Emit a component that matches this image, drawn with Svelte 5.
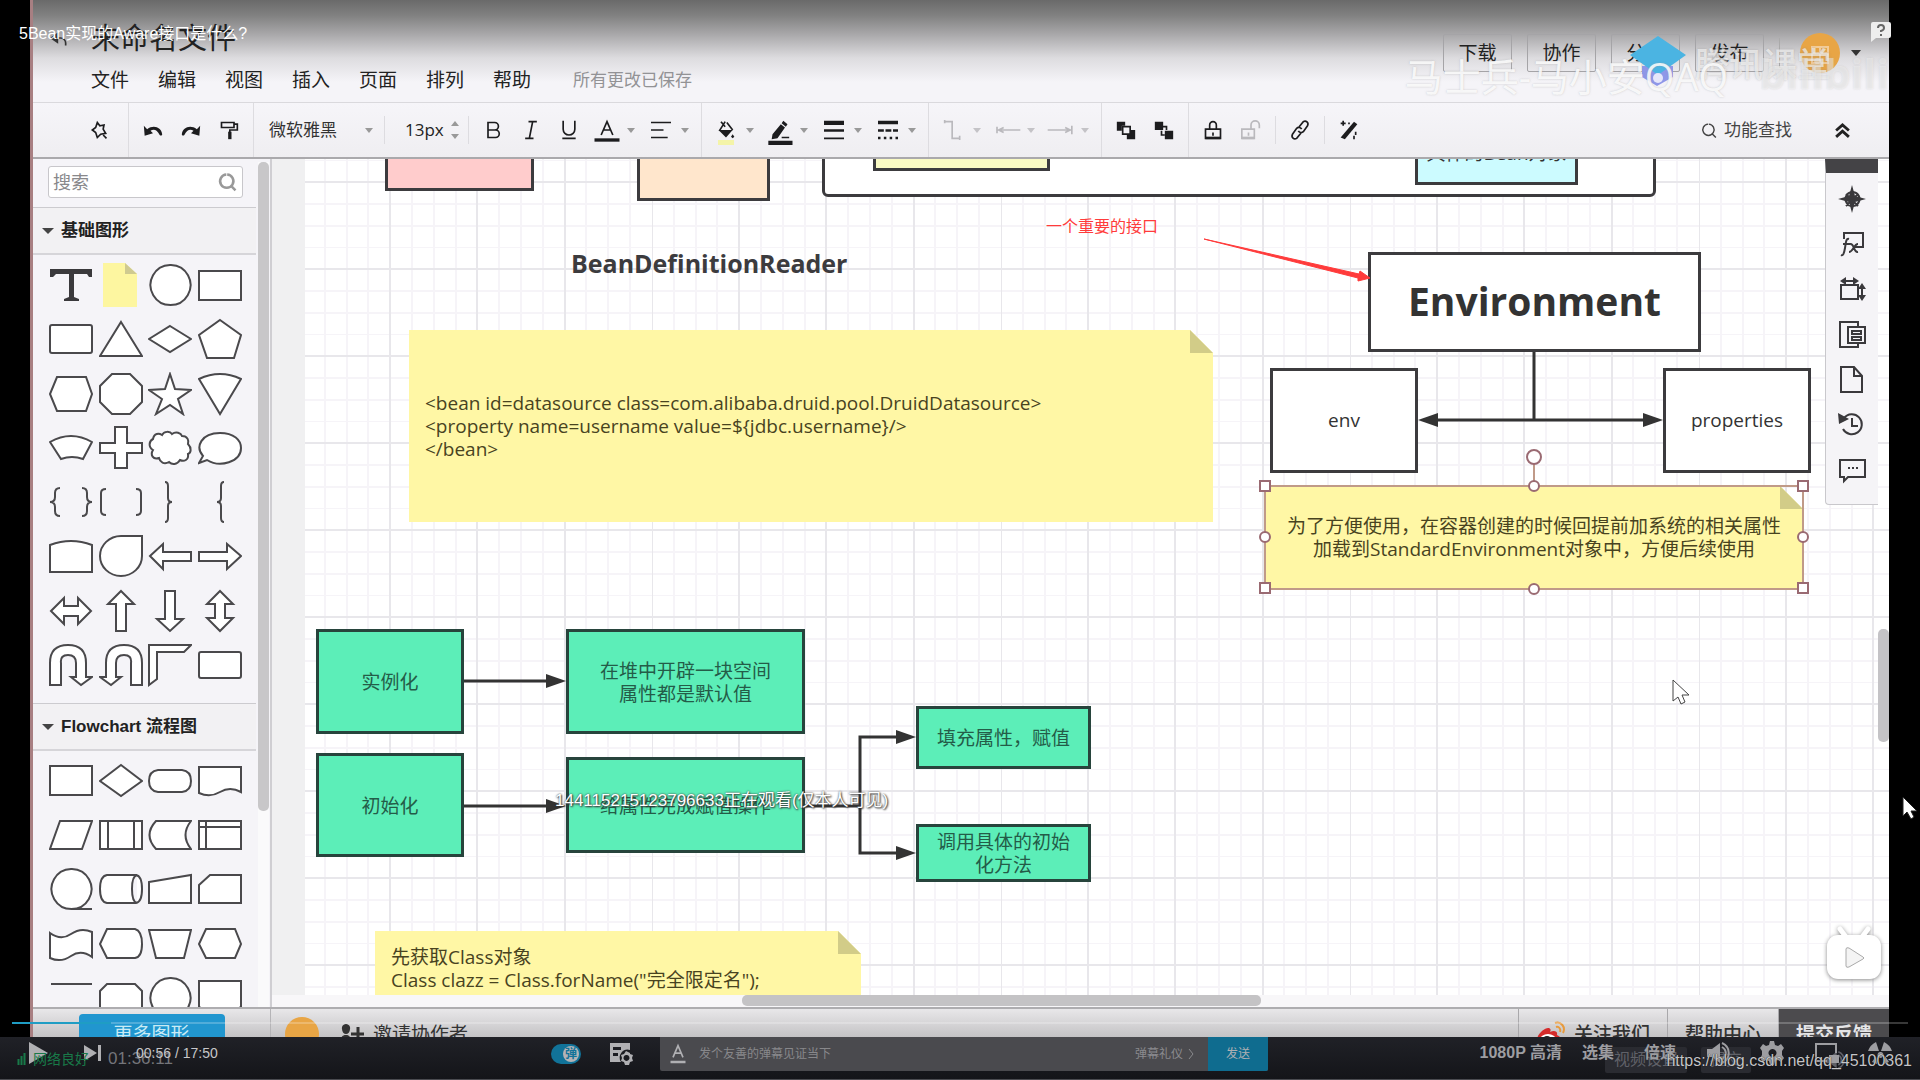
<script>
	const menus = ['文件', '编辑', '视图', '插入', '页面', '排列', '帮助'];
	const actions = ['下载', '协作', '分享', '发布'];

	// every icon has a stroked part (line) and a filled part (solid)
	const icons = {
		back: { line: 'M6 12h8a6 6 0 0 1 6 6v3', solid: 'M11 5v14L1 12z' },
		pin: { line: 'M10 3l3 4 5-1-1 5 3 5-6 1-4 4-2-6-4-3 4-3zM17 18l4 4' },
		undo: { solid: 'M1 7l1 12 10-3-3-3c4-3 8-1 11 5 1 1 3 1 3-1-1-8-10-12-18-6z' },
		redo: { solid: 'M23 7l-1 12-10-3 3-3c-4-3-8-1-11 5-1 1-3 1-3-1 1-8 10-12 18-6z' },
		painter: { line: 'M3 3h15v6H3zM18 5h4v7h-9v3', solid: 'M11 14h4v9h-4z' },
		bold: { line: 'M6 2v20M6 3h8a4 4 0 0 1 0 9H6h9a4 4 0 0 1 0 9H6' },
		italic: { line: 'M9 2h10M5 22h10M14 2l-4 20' },
		underline: { line: 'M5 1v10a7 7 0 0 0 14 0V1M4 22h16' },
		color: { line: 'M5 18l7-16 7 16M8 12h8', solid: 'M-3 22h30v4H-3z' },
		align: { line: 'M0 3h24M0 12h15M0 21h20' },
		bucket: { line: 'M6 2l5 6M11 2L4 13M13 3l7 9', solid: 'M3 12h17l-8 9zM20 17l2 3-2 2-2-2z' },
		pen: { solid: 'M16 1l5 4-2 3-5-4zM13 5l5 4-9 13-7 1 1-6zM14 20h9v2h-9zM-2 25h29v5H-2z' },
		weight: { solid: 'M0 1h24v5H0zM0 11h24v3H0zM0 21h24v2H0z' },
		dash: { solid: 'M0 1h24v4H0zM0 11h7v3H0zM9 11h7v3H9zM18 11h6v3h-6zM0 20h3v3H0zM7 20h3v3H7zM14 20h3v3h-3zM21 20h3v3h-3z' },
		elbow: { line: 'M2 2h9v20h8M2 0v4M20 19v5' },
		arrowLeft: { line: 'M2 12h26M8 9l-6 3 6 3M0 8v8' },
		arrowRight: { line: 'M-4 12h28M17 9l6 3-6 3M25 7v10' },
		front: { line: 'M8 8h9v9H8z', solid: 'M1 2h10v5H7v6H1zM18 12h5v11H13v-5h5z' },
		backward: { line: 'M10 8h5v4M9 13v5h4', solid: 'M1 2h10v10H1zM13 13h10v10H13z' },
		lock: { line: 'M3 11h18v11H3zM8 11V6a4 4 0 0 1 8 0v5M12 15v4', solid: 'M3 20h18v3H3z' },
		unlock: { line: 'M1 11h15v11H1zM12 11V6a4 4 0 0 1 10 0v4M9 15v4', solid: 'M1 20h15v3H1z' },
		link: { line: 'M11 8l5-6c3-2 7 1 5 5l-5 7c-2 2-5 1-6-1M13 16l-5 6c-3 2-7-1-5-5l5-7c2-2 5-1 6 1' },
		wand: { line: 'M5 1v6M2 4h6M20 14v4M18 19v4M12 3v2', solid: 'M18 2l4 3L7 23l-5-2z' },
		search: { line: 'M10 3a8 8 0 1 0 1 0M16 17l5 5' },
		up: { line: 'M3 12l9-8 9 8M3 21l9-8 9 8' },
		compass: { line: 'M12 5a7 7 0 1 0 1 0M6 7l12 12M18 7L6 19', solid: 'M12-2l3 11 11 3-11 3-3 11-3-11-11-3 11-3z' },
		fx: { line: 'M4 7V1h19v14h-8M9 7c-3-1-3 3-4 9s-2 8-4 7M3 12h7M10 12c5-1 3 9 8 8M18 12c-4 0-5 8-9 8' },
		size: { line: 'M1 8h17v14H1zM3 4h14M22 9v12', solid: 'M0 4l6-4v8zM19 4l-6-4v8zM22 6l4 6h-8zM22 24l4-6h-8z' },
		layers: { line: 'M18 4V0H0v25h18v-3M8 5h17v16H8zM12 9h9v3h-9zM12 15h9v3h-9z' },
		page: { line: 'M1 0h13l8 9v16H1zM14 0v9h8' },
		history: { line: 'M4 6a10 10 0 1 1-1 11M12 6v8h6', solid: 'M-2 1l1 11 10-5z' },
		comment: { line: 'M0 3h25v17H8l-4 4v-4H0z', solid: 'M8 10h2v2H8zM12 10h2v2h-2zM16 10h2v2h-2z' },
		invite: { line: 'M18 5v14M11 12h13', solid: 'M6 2a4 4 0 0 1 4 5c0 3-2 5-4 5s-4-2-4-5a4 4 0 0 1 4-5zM0 22c0-6 2-9 6-9s5 3 5 9z' },
		play: { solid: 'M3 1l19 11L3 23z' },
		next: { solid: 'M4 4l13 8-13 8zM18 4h3v16h-3z' },
		panel: { solid: 'M2 2h20v7a8 8 0 0 0-9 12H2zM5 6v3h8V6zM5 12v3h5v-3zM18 10l4 2v1l3 1-1 3 1 3-3 1-1 3h-4l-1-3-3-1 1-3-1-3 3-1zM18 14a3 3 0 1 0 1 0z' },
		letter: { line: 'M6 16l6-14 6 14M8 11h8', solid: 'M3 20h18v3H3z' },
		volume: { line: 'M16 6c5 3 5 9 0 12M16 2c9 4 9 16 0 20', solid: 'M1 8h5l8-6v20l-8-6H1z' },
		gear: { solid: 'M10 0h4l1 4 3 1 3-2 3 4-2 3v4l2 3-3 4-3-2-3 1-1 4h-4l-1-4-3-1-3 2-3-4 2-3v-4L0 7l3-4 3 2 3-1zM12 8a4 4 0 1 0 1 0z' },
		pip: { line: 'M13 20H2V3h20v9', solid: 'M15 14h10v8H15z' },
		full: { solid: 'M8 1l3 9H0Q2 4 8 1zM16 1l-3 9h11Q22 4 16 1zM12 11a3 3 0 1 0 1 0zM8 15l-4 6 5 2zM17 15l4 6-5 2z' }
	};

	const drop = true;
	const dim = true;
	const toolGroups = [
		{ items: [{ icon: 'bold' }, { icon: 'italic' }, { icon: 'underline' }, { icon: 'color', drop }, { icon: 'align', drop }] },
		{ items: [{ icon: 'bucket', drop }, { icon: 'pen', drop }, { icon: 'weight', drop }, { icon: 'dash', drop }] },
		{ items: [{ icon: 'elbow', drop, dim }, { icon: 'arrowLeft', drop, dim }, { icon: 'arrowRight', drop, dim }] },
		{ items: [{ icon: 'front' }, { icon: 'backward' }] },
		{ items: [{ icon: 'lock' }, { icon: 'unlock', dim }], short: true },
		{ items: [{ icon: 'link' }], short: true }
	];
	const panelIcons = ['compass', 'fx', 'size', 'layers', 'page', 'history', 'comment'];

	const basicShapes = [
		{ d: 'M1 6h42v8h-3l-2-3H25v23l5 2v2H15v-2l5-2V11H7l-3 3H1z', kind: 'dark' },
		{ d: 'M4 0h22l12 11v33H4z', kind: 'paper' },
		{ d: 'M22 2a20 20 0 1 0 1 0z' },
		{ d: 'M1 8h42v29H1z' },
		{ d: 'M3 8h38q2 0 2 2v24q0 2-2 2H3q-2 0-2-2V10q0-2 2-2z' },
		{ d: 'M22 5l21 34H1z' },
		{ d: 'M22 9l21 13-21 13L1 22z' },
		{ d: 'M22 3l21 15-7 23H9L1 18z' },
		{ d: 'M8 5h29l6 17-6 17H8L1 22z' },
		{ d: 'M13 2h18l12 12v16L31 42H13L1 30V14z' },
		{ d: 'M22 2l5 15 16 1-13 9 5 15-13-9-14 9 6-15L1 18l16-1z' },
		{ d: 'M1 7q21-10 42 0L22 42z' },
		{ d: 'M1 16q21-12 42 0l-9 17q-11-4-22 0z' },
		{ d: 'M16 1h12v16h15v10H28v15H16V27H1V17h15z' },
		{ d: 'M5 13c1-6 6-6 9-4 2-4 8-4 10-1 4-3 9-1 10 2 6 0 7 5 6 8 4 4 3 9 0 10 1 6-4 8-8 6-3 5-8 5-11 2-5 3-9 0-10-4-6 2-9-3-6-8-5-3-4-9 0-11z' },
		{ d: 'M1 37l4-7c-8-9-2-23 17-23 14 0 21 7 21 15 0 14-21 20-34 12z' },
		{ d: 'M11 8q-5 0-5 5v4q0 5-5 5q5 0 5 5v4q0 5 5 5M33 8q5 0 5 5v4q0 5 5 5q-5 0-5 5v4q0 5-5 5', kind: 'open' },
		{ d: 'M7 9q-5 0-5 4v18q0 4 5 4M37 9q5 0 5 4v18q0 4-5 4', kind: 'open' },
		{ d: 'M17 2q3 0 3 4v12q0 4 4 4q-4 0-4 4v12q0 4-3 4', kind: 'open' },
		{ d: 'M26 2q-3 0-3 4v12q0 4-4 4q4 0 4 4v12q0 4 3 4', kind: 'open' },
		{ d: 'M1 11q21-8 42 0v27H1z' },
		{ d: 'M43 2v20A21 20 0 1 1 22 2z' },
		{ d: 'M2 22L15 10v8h28v9H15v8z' },
		{ d: 'M43 22L29 10v8H1v9h28v8z' },
		{ d: 'M2 22L15 9v8h14V9l13 13-13 13v-8H15v8z' },
		{ d: 'M22 2l13 13h-8v27H17V15H9z' },
		{ d: 'M17 2h10v28h8L22 42 9 30h8z' },
		{ d: 'M22 2l13 13h-8v14h8L22 42 9 29h8V15H9z' },
		{ d: 'M1 42V20Q1 2 19 2t18 18v14h6l-11 8-10-8h5V20q0-8-8-8t-7 8v22z' },
		{ d: 'M43 42V20Q43 2 25 2T7 20v14H1l11 8 10-8h-5V20q0-8 8-8t7 8v22z' },
		{ d: 'M1 2h42l-7 7H9v27l-8 6z' },
		{ d: 'M3 9h38q2 0 2 2v22q0 2-2 2H3q-2 0-2-2V11q0-2 2-2z' }
	];
	const flowShapes = [
		{ d: 'M1 7h42v29H1z' },
		{ d: 'M22 6l21 16-21 15L1 22z' },
		{ d: 'M10 11h24q9 1 9 11t-9 11H10q-9-1-9-11t9-11z' },
		{ d: 'M1 8h42v25q-11-6-21 0t-21 1z' },
		{ d: 'M11 8h32l-10 28H1z' },
		{ d: 'M1 8h42v28H1zM9 8v28M35 8v28' },
		{ d: 'M8 8h35q-11 14 0 28H8Q-5 22 8 8z' },
		{ d: 'M1 8h42v28H1zM1 14h42M8 8v28' },
		{ d: 'M22 2a20 20 0 1 0 1 0zM20 42h23' },
		{ d: 'M8 8h29q6 1 6 14t-6 14H8Q1 35 1 22T8 8zM38 8q-5 1-5 14t5 14' },
		{ d: 'M1 15l42-7v28H1z' },
		{ d: 'M1 18L12 8h31v28H1z' },
		{ d: 'M1 11q11 8 21 1t21-2v25q-11-8-21-1t-21 2z' },
		{ d: 'M8 7h28q7 2 7 15t-7 14H8L1 22z' },
		{ d: 'M1 8h42l-7 28H8z' },
		{ d: 'M8 7h29l6 15-6 14H8L1 22z' },
		{ d: 'M2 8h41' },
		{ d: 'M1 15l7-7h28l7 7v22H1z' },
		{ d: 'M22 2a20 20 0 1 0 1 0z' },
		{ d: 'M1 5h42v26L22 42 1 31z' }
	];

	const nodes = [
		{ x: 113, y: -40, w: 149, h: 72, fill: '#ffcccc' },
		{ x: 365, y: -40, w: 133, h: 82, fill: '#ffe6cc' },
		{ x: 550, y: -40, w: 834, h: 78, fill: '#ffffff', round: true },
		{ x: 601, y: -40, w: 177, h: 52, fill: '#f9fac4' },
		{ x: 1143, y: -38, w: 163, h: 64, fill: '#ccfbff', lines: ['具体的Bean对象'] },
		{ x: 1096, y: 93, w: 333, h: 100, fill: '#ffffff', lines: ['Environment'], big: true },
		{ x: 998, y: 209, w: 148, h: 105, fill: '#ffffff', lines: ['env'] },
		{ x: 1391, y: 209, w: 148, h: 105, fill: '#ffffff', lines: ['properties'] },
		{ x: 44, y: 470, w: 148, h: 105, fill: '#5ceeb8', lines: ['实例化'], green: true },
		{ x: 294, y: 470, w: 239, h: 105, fill: '#5ceeb8', lines: ['在堆中开辟一块空间', '属性都是默认值'], green: true },
		{ x: 44, y: 594, w: 148, h: 104, fill: '#5ceeb8', lines: ['初始化'], green: true },
		{ x: 294, y: 598, w: 239, h: 96, fill: '#5ceeb8', lines: ['给属性完成赋值操作'], green: true },
		{ x: 644, y: 547, w: 175, h: 63, fill: '#5ceeb8', lines: ['填充属性，赋值'], green: true },
		{ x: 644, y: 665, w: 175, h: 58, fill: '#5ceeb8', lines: ['调用具体的初始', '化方法'], green: true }
	];
	const notes = [
		{ x: 137, y: 171, w: 804, h: 192, lines: ['<bean id=datasource class=com.alibaba.druid.pool.DruidDatasource>', '<property name=username value=${jdbc.username}/>', '</bean>'] },
		{ x: 103, y: 772, w: 486, h: 76, lines: ['先获取Class对象', 'Class clazz = Class.forName("完全限定名");'] },
		{ x: 993, y: 327, w: 538, h: 103, lines: ['为了方便使用，在容器创建的时候回提前加系统的相关属性', '加载到StandardEnvironment对象中，方便后续使用'], center: true }
	];
	const wires = [
		'M192 522H276',
		'M192 647H276',
		'M533 647H588M625 578H588V694H625',
		'M1262 193V261M1164 261H1373'
	];
	const heads = ['M294 522l-20-7v14z', 'M294 647l-20-7v14z', 'M644 578l-20-7v14z', 'M644 694l-20-7v14z', 'M1146 261l20-7v14z', 'M1391 261l-20-7v14z'];

	let current = $state(56);
	const duration = 1070;
	let played = $derived((current / duration) * 100);
	let danmaku = $state(true);
	let message = $state('');
	let keyword = $state('');
	let fontSize = $state('13px');
	let fontName = $state('微软雅黑');
</script>

{#snippet icon(name)}
	<svg class="icon" viewBox="0 0 24 24" aria-hidden="true">
		{#if icons[name].line}<path class="line" d={icons[name].line} />{/if}
		{#if icons[name].solid}<path class="solid" d={icons[name].solid} />{/if}
	</svg>
{/snippet}

{#snippet shapeGrid(shapes)}
	{#each shapes as shape}
		<button class="shape" aria-label="图形">
			<svg class={shape.kind ?? 'plain'} viewBox="0 0 44 44">
				<path d={shape.d} />
				{#if shape.kind === 'paper'}<path class="fold" d="M26 0v11h12z" />{/if}
			</svg>
		</button>
	{/each}
{/snippet}

<div class="page">
	<div class="frame">
		<header>
			<div class="doc">
				<button class="back" aria-label="返回">{@render icon('back')}</button>
				<h1>未命名文件</h1>
			</div>
			<nav>
				{#each menus as item}
					<button>{item}</button>
				{/each}
				<span class="saved">所有更改已保存</span>
			</nav>
			<div class="actions">
				{#each actions as item}
					<button>{item}</button>
				{/each}
				<span class="split"></span>
				<span class="avatar">
					<svg viewBox="0 0 40 40"><path d="M12 14h16v16H12zM12 20h16M20 14v16" /></svg>
				</span>
				<span class="caret"></span>
			</div>
		</header>

		<div class="toolbar">
			<div class="group first">
				<button class="tool" aria-label="固定">{@render icon('pin')}</button>
			</div>
			<div class="group">
				<button class="tool" aria-label="撤销">{@render icon('undo')}</button>
				<button class="tool" aria-label="重做">{@render icon('redo')}</button>
				<button class="tool" aria-label="格式刷">{@render icon('painter')}</button>
			</div>
			<div class="group short font">
				<select aria-label="字体" bind:value={fontName}>
					<option>微软雅黑</option>
				</select>
				<span class="caret"></span>
			</div>
			<div class="group short size">
				<input type="text" aria-label="字号" bind:value={fontSize} />
				<svg viewBox="0 0 8 18"><path d="M0 5l4-5 4 5zM0 13h8l-4 5z" /></svg>
			</div>
			{#each toolGroups as group}
				<div class="group" class:short={group.short}>
					{#each group.items as item}
						<button class="tool {item.icon}" class:drop={item.drop} class:dim={item.dim} aria-label={item.icon}>
							<span>{@render icon(item.icon)}</span>
							{#if item.drop}<i class="caret"></i>{/if}
						</button>
					{/each}
				</div>
			{/each}
			<div class="group last">
				<button class="tool" aria-label="美化">{@render icon('wand')}</button>
			</div>
			<button class="find">{@render icon('search')}功能查找</button>
			<button class="fold-up" aria-label="收起">{@render icon('up')}</button>
		</div>

		<main>
			<aside class="sidebar">
				<div class="library">
					<label class="search">
						<input type="text" placeholder="搜索" bind:value={keyword} />
						{@render icon('search')}
					</label>
					<h2><span class="caret"></span>基础图形</h2>
					<div class="shapes basic">{@render shapeGrid(basicShapes)}</div>
					<h2><span class="caret"></span>Flowchart 流程图</h2>
					<div class="shapes flow">{@render shapeGrid(flowShapes)}</div>
				</div>
				<div class="track"><div class="thumb"></div></div>
			</aside>

			<section class="workspace">
				<div class="board">
					<svg class="layer">
						<defs>
							<pattern id="minor" x="31" y="1" width="349" height="87" patternUnits="userSpaceOnUse">
								<path d="M22 0v87M44 0v87M65 0v87M109 0v87M131 0v87M153 0v87M196 0v87M218 0v87M240 0v87M283 0v87M305 0v87M327 0v87M0 0h349M0 44h349M0 66h349" stroke="#f6f4f8" stroke-width="2" />
								<path d="M0 22h349M0 0v87M87 0v87M174 0v87M262 0v87" stroke="#e8e7eb" stroke-width="2" />
							</pattern>
						</defs>
						<rect width="100%" height="100%" fill="url(#minor)" />
						<rect width="33" height="100%" fill="#f0f0f1" />
					</svg>

					{#each nodes as node}
						<div
							class="node"
							class:round={node.round}
							class:big={node.big}
							class:green={node.green}
							style="left:{node.x}px;top:{node.y}px;width:{node.w}px;height:{node.h}px;background:{node.fill}"
						>
							{#each node.lines ?? [] as line}
								<span>{line}</span>
							{/each}
						</div>
					{/each}

					<h3 class="caption">BeanDefinitionReader</h3>

					{#each notes as note}
						<div
							class="note"
							class:center={note.center}
							style="left:{note.x}px;top:{note.y}px;width:{note.w}px;height:{note.h}px"
						>
							{#each note.lines as line}
								<span>{line}</span>
							{/each}
						</div>
					{/each}

					<svg class="layer">
						<g class="wires">
							{#each wires as d}<path {d} />{/each}
						</g>
						{#each heads as d}<path {d} fill="#333" />{/each}
						<path d="M932 80L1087 115l1-3 10 7-12 3v-3z" fill="#ff3b3b" stroke="#ff3b3b" stroke-width="1" />
						<g class="handles">
							<path class="edge" d="M993 327H1531V430H993zM1262 304V322" />
							<path d="M988 322h10v10h-10zM1526 322h10v10h-10zM988 424h10v10h-10zM1526 424h10v10h-10z" />
							<circle cx="1262" cy="298" r="7" />
							<circle cx="1262" cy="327" r="5" />
							<circle cx="1262" cy="430" r="5" />
							<circle cx="993" cy="378" r="5" />
							<circle cx="1531" cy="378" r="5" />
						</g>
						<path d="M1401 521v21l5-4 3 7 4-2-3-7h7z" fill="#fff" stroke="#444" stroke-width="1" />
					</svg>

					<p class="remark">一个重要的接口</p>
					<p class="danmaku">144115215123796633正在观看(仅本人可见)</p>

					<div class="panel">
						{#each panelIcons as name}
							<button aria-label={name}>{@render icon(name)}</button>
						{/each}
					</div>
					<div class="vthumb"></div>
				</div>
				<div class="hscroll"><div class="hthumb"></div></div>

				<svg class="tv" viewBox="0 0 60 60">
					<path d="M16 4l6 8M44 4l-6 8" stroke="#fff" stroke-width="5" stroke-linecap="round" />
					<rect x="3" y="10" width="54" height="44" rx="11" fill="#fff" />
					<path d="M22 24q0-2 3-1l14 9q2 1 0 2l-14 8q-3 1-3-1z" fill="#f4f4f4" stroke="#aaa" stroke-width="1" />
				</svg>
			</section>
		</main>

		<footer>
			<div class="more"><button>更多图形</button></div>
			<div class="invite">
				<span class="avatar"></span>
				{@render icon('invite')}
				<button>邀请协作者</button>
			</div>
			<a class="cell" href="#weibo">
				<svg viewBox="0 0 30 26">
					<path d="M1 19c0-6 8-13 12-12 2 1 2 2 1 4 4-2 8-1 7 3 9 4 2 12-8 12-7 0-12-3-12-7z" fill="#d52b2b" />
					<ellipse cx="12" cy="19" rx="8" ry="6" fill="#fff" />
					<circle cx="11" cy="19" r="4" fill="#222" />
					<path d="M19 2c6-2 11 4 8 10M20 6c3-1 5 2 4 5" fill="none" stroke="#e89a3c" stroke-width="2" />
				</svg>
				关注我们
			</a>
			<a class="cell" href="#help">帮助中心</a>
			<a class="cell dark" href="#feedback">提交反馈</a>
		</footer>
	</div>

	<div class="player">
		<input
			class="progress"
			type="range"
			min="0"
			max={duration}
			aria-label="播放进度"
			bind:value={current}
			style="--played:{played}%"
		/>
		<div class="stream">
			<svg viewBox="0 0 8 12"><path d="M0 6h2v6H0zM3 3h2v9H3zM6 0h2v12H6z" /></svg>
			<span class="net">网络良好</span>
			<span class="clock">01:36:11</span>
		</div>
		<div class="stream-right">
			<span>视频设置</span>
			<span>提交</span>
			{@render icon('volume')}
		</div>
		<button class="play" aria-label="播放">{@render icon('play')}</button>
		<button class="skip" aria-label="下一个">{@render icon('next')}</button>
		<span class="time">00:56 / 17:50</span>

		<label class="switch">
			<input type="checkbox" aria-label="弹幕开关" bind:checked={danmaku} />
			<span>弹</span>
		</label>
		<button class="setting" aria-label="弹幕设置">{@render icon('panel')}</button>
		<form class="send" onsubmit={(e) => e.preventDefault()}>
			{@render icon('letter')}
			<input type="text" aria-label="弹幕" placeholder="发个友善的弹幕见证当下" bind:value={message} />
			<a href="#rules">弹幕礼仪 <svg viewBox="0 0 6 12"><path d="M1 1l4 5-4 5" /></svg></a>
			<button>发送</button>
		</form>
		<div class="controls">
			<div class="texts">
				<button>1080P 高清</button>
				<button>选集</button>
			</div>
			<button>倍速</button>
			<button aria-label="音量">{@render icon('volume')}</button>
			<button aria-label="设置">{@render icon('gear')}</button>
			<button aria-label="画中画">{@render icon('pip')}</button>
			<button aria-label="全屏">{@render icon('full')}</button>
		</div>
		<span class="source">https://blog.csdn.net/qq_45100361</span>
	</div>

	<p class="video-title">5Bean实现的Aware接口是什么?</p>
	<div class="brand">
		<svg viewBox="0 0 56 56">
			<path d="M12 30v11l15 9 16-9V30z" fill="#8f97e8" />
			<path d="M28 0l28 19-28 20L0 19z" fill="#4bb4e2" />
			<circle cx="28" cy="42" r="5" fill="#e6e6fa" />
		</svg>
		腾讯课堂
	</div>
	<p class="owner">马士兵-马小安QAQ</p>
	<p class="bili">bilibili</p>
	<svg class="help" viewBox="0 0 20 20">
		<path d="M2 0h16q2 0 2 2v12q0 2-2 2H5l-5 4V2q0-2 2-2z" fill="#eee" />
		<path d="M7 6q0-3 3-3t3 3q0 2-3 3v1M10 12v2" fill="none" stroke="#666" stroke-width="2" />
	</svg>
	<svg class="pointer" viewBox="0 0 16 24">
		<path d="M1 1v19l4-4 4 7 3-2-3-6h6z" fill="#fff" stroke="#222" stroke-width="1" />
	</svg>
</div>

<style>
	:global(body) {
		margin: 0;
		background: #000;
	}

	.page {
		position: relative;
		display: flex;
		flex-direction: column;
		height: 100vh;
		overflow: hidden;
		background: #000;
		color: #222;
		font-family: 'Open Sans', 'Noto Sans CJK SC', sans-serif;
		font-size: 17px;
		line-height: 24px;
	}

	button,
	input,
	select {
		margin: 0;
		padding: 0;
		border: 0;
		background: none;
		color: inherit;
		font: inherit;
		outline: none;
	}

	h1,
	h2,
	h3,
	p {
		margin: 0;
	}

	a {
		color: inherit;
		text-decoration: none;
	}

	.icon {
		display: block;
		width: 20px;
		height: 20px;
		overflow: visible;
		flex: none;
	}

	.icon .line {
		fill: none;
		stroke: currentColor;
		stroke-width: 2;
	}

	.icon .solid {
		fill: currentColor;
		fill-rule: evenodd;
	}

	.caret {
		display: block;
		width: 0;
		border: 4px solid transparent;
		border-top: 5px solid #999;
		border-bottom: 0;
	}

	.frame {
		flex: 1;
		min-height: 0;
		display: flex;
		flex-direction: column;
		margin: 0 31px 0 30px;
		border-left: 3px solid #a87f82;
		background: #f5f4f8;
	}

	/* header */
	header {
		position: relative;
		height: 103px;
		box-sizing: border-box;
		border-bottom: 1px solid #dad9dd;
		background: linear-gradient(#6a6a6a, #828282 16px, #a8a7a9 34px, #dddcdf 58px, #f5f4f8 82px);
	}

	.doc {
		display: flex;
		align-items: center;
		gap: 14px;
		height: 66px;
		padding: 10px 0 0 16px;
		box-sizing: border-box;
	}

	.back {
		width: 28px;
		color: #333;
	}

	h1 {
		font-size: 29px;
		font-weight: 400;
		line-height: 36px;
	}

	nav {
		display: flex;
		gap: 29px;
		padding-left: 58px;
		font-size: 19px;
		line-height: 28px;
	}

	.saved {
		padding-left: 13px;
		color: #929295;
		font-size: 17px;
	}

	.actions {
		position: absolute;
		top: 33px;
		right: 28px;
		display: flex;
		align-items: center;
		gap: 15px;
	}

	.actions button {
		width: 69px;
		height: 38px;
		box-sizing: border-box;
		border: 1px solid #a5a4a7;
		border-radius: 2px;
		font-size: 19px;
	}

	.split {
		width: 1px;
		height: 30px;
		background: #aaa;
	}

	.avatar {
		width: 40px;
		height: 40px;
		margin-left: 5px;
		border-radius: 50%;
		background: #e8a545;
	}

	.avatar path {
		fill: none;
		stroke: #f3cd9a;
		stroke-width: 2;
	}

	.actions .caret {
		margin-left: -4px;
		border-width: 6px 5px 0;
		border-top-color: #333;
	}

	/* toolbar */
	.toolbar {
		display: flex;
		align-items: center;
		height: 56px;
		box-sizing: border-box;
		border-bottom: 2px solid #aaa9ac;
		background: linear-gradient(#f6f5f9, #efeef1);
	}

	.group {
		display: flex;
		align-items: center;
		height: 100%;
		padding: 0 5px;
		border-right: 1px solid #dddce0;
	}

	.group.short {
		height: 28px;
	}

	.group.first {
		padding: 0 10px 0 47px;
	}

	.group.last {
		border: 0;
	}

	.tool {
		display: flex;
		align-items: center;
		justify-content: center;
		width: 38px;
		height: 40px;
		color: #1c1c1e;
	}

	.tool.drop {
		width: 54px;
		justify-content: flex-start;
		padding-left: 9px;
		gap: 10px;
	}

	.tool.dim {
		color: #bab9bd;
	}

	.tool.dim .caret {
		border-top-color: #c4c3c7;
	}

	.bucket span {
		box-shadow: 0 7px 0 -2px #f4f4a8;
	}

	.group.font {
		gap: 12px;
		width: 104px;
		padding: 0 11px 0 15px;
	}

	.font select {
		appearance: none;
		flex: 1;
		font-size: 17px;
		color: #333;
	}

	.group.size {
		gap: 6px;
		padding: 0 9px 0 20px;
	}

	.size input {
		width: 40px;
	}

	.size svg {
		width: 8px;
		height: 18px;
		fill: #999;
	}

	.find {
		display: flex;
		align-items: center;
		gap: 6px;
		margin-left: auto;
		color: #444;
	}

	.find .icon {
		width: 17px;
		height: 17px;
	}

	.fold-up {
		margin: 0 38px 0 42px;
	}

	.fold-up .icon {
		width: 17px;
		height: 17px;
	}

	.fold-up .line {
		stroke-width: 4;
	}

	/* shape library */
	main {
		flex: 1;
		min-height: 0;
		display: flex;
	}

	.sidebar {
		display: flex;
		width: 237px;
		border-right: 2px solid #cfced2;
		overflow: hidden;
	}

	.library {
		width: 223px;
	}

	.search {
		display: flex;
		align-items: center;
		height: 32px;
		margin: 7px 13px 9px 15px;
		padding: 0 4px;
		box-sizing: border-box;
		border: 1px solid #c8c7cb;
		border-radius: 3px;
		background: #fff;
		color: #999;
	}

	.search input {
		flex: 1;
		min-width: 0;
		font-size: 18px;
	}

	.search .line {
		stroke-width: 3;
	}

	input::placeholder {
		color: #88888b;
		opacity: 1;
	}

	h2 {
		display: flex;
		align-items: center;
		gap: 7px;
		height: 48px;
		padding-left: 9px;
		box-sizing: border-box;
		border-top: 1px solid #cccbcf;
		border-bottom: 2px solid #d6d5d9;
		background: #f2f1f3;
		font-family: 'Liberation Sans', 'Noto Sans CJK SC', sans-serif;
		font-size: 17px;
		font-weight: 700;
	}

	h2 .caret {
		border-width: 6px 6px 0;
		border-top-color: #444;
	}

	.shapes {
		display: grid;
		grid-template-columns: repeat(4, 1fr);
		margin: 3px 11px 11px 13px;
	}

	.basic {
		grid-template-rows: repeat(8, 1fr);
		height: 434px;
	}

	.flow {
		grid-template-rows: repeat(5, 1fr);
		height: 271px;
	}

	.shape {
		display: flex;
		align-items: center;
		justify-content: center;
	}

	.shape svg {
		width: 44px;
		height: 44px;
		fill: #fff;
		stroke: #4a494c;
		stroke-width: 2;
	}

	.shape .open {
		fill: none;
	}

	.shape .dark {
		fill: #3a393c;
		stroke: none;
	}

	.shape .paper {
		fill: #fdf6a0;
		stroke: none;
	}

	.shape .fold {
		fill: #cfca90;
	}

	.track {
		width: 11px;
		margin: 3px 0 0 2px;
		background: #fafafb;
	}

	.thumb {
		height: 649px;
		border-radius: 5px;
		background: #c8c7c9;
	}

	/* canvas */
	.workspace {
		position: relative;
		flex: 1;
		min-width: 0;
		display: flex;
		flex-direction: column;
		background: #fff;
	}

	.board {
		position: relative;
		flex: 1;
		overflow: hidden;
		font-size: 19px;
		line-height: 23px;
	}

	.layer {
		position: absolute;
		inset: 0;
		width: 100%;
		height: 100%;
	}

	.node {
		position: absolute;
		display: flex;
		flex-direction: column;
		align-items: center;
		justify-content: center;
		box-sizing: border-box;
		border: 3px solid #3c3b3e;
		color: #333;
	}

	.node.round {
		border-radius: 6px;
	}

	.node.green {
		padding-top: 2px;
		border-color: #27443c;
		color: #245c48;
	}

	.node.big {
		padding-bottom: 3px;
		font-size: 39px;
		font-weight: 700;
	}

	.caption {
		position: absolute;
		left: 299px;
		top: 88px;
		color: #3c3b3e;
		font-size: 25px;
		line-height: 32px;
	}

	.note {
		position: absolute;
		display: flex;
		flex-direction: column;
		justify-content: center;
		padding: 0 16px;
		box-sizing: border-box;
		background: #fff7a5;
		color: #48431f;
		white-space: pre;
		clip-path: polygon(0 0, calc(100% - 23px) 0, 100% 23px, 100% 100%, 0 100%);
	}

	.note::after {
		content: '';
		position: absolute;
		top: 0;
		right: 0;
		width: 23px;
		height: 23px;
		background: #d2cc88;
	}

	.note.center {
		align-items: center;
	}

	.wires path {
		fill: none;
		stroke: #333;
		stroke-width: 3;
	}

	.handles {
		fill: #fff;
		stroke: #9a6a72;
		stroke-width: 2;
	}

	.handles .edge {
		fill: none;
		stroke: #c09a88;
	}

	.remark {
		position: absolute;
		left: 774px;
		top: 56px;
		color: #ff3b3b;
		font-size: 16px;
	}

	.danmaku {
		position: absolute;
		left: 283px;
		top: 630px;
		color: #fff;
		font-family: 'Liberation Sans', 'Noto Sans CJK SC', sans-serif;
		font-size: 17px;
		text-shadow: 0 0 2px #333, 1px 1px 2px #333;
	}

	.panel {
		position: absolute;
		top: 0;
		right: 11px;
		display: flex;
		flex-direction: column;
		width: 52px;
		padding: 3px 0 13px;
		border: 1px solid #c9c8cc;
		border-width: 0 0 1px 1px;
		border-top: 14px solid #444346;
		border-bottom-left-radius: 4px;
		background: #f5f4f7;
		color: #3a393c;
	}

	.panel button {
		display: flex;
		align-items: center;
		justify-content: center;
		height: 45px;
	}

	.panel .icon {
		width: 24px;
		height: 24px;
	}

	.vthumb {
		position: absolute;
		top: 470px;
		right: 0;
		width: 11px;
		height: 113px;
		border-radius: 5px;
		background: #c4c3c6;
	}

	.hscroll {
		height: 12px;
		background: #f8f7f9;
	}

	.hthumb {
		width: 519px;
		height: 11px;
		margin-left: 470px;
		border-radius: 5px;
		background: #c4c3c5;
	}

	.tv {
		position: absolute;
		right: 5px;
		bottom: 22px;
		width: 60px;
		height: 60px;
		filter: drop-shadow(0 1px 2px #888);
	}

	/* bottom bar of the editor */
	footer {
		display: flex;
		align-items: flex-start;
		height: 30px;
		box-sizing: border-box;
		border-top: 2px solid #aeadb0;
		background: linear-gradient(#e8e7e9, #c4c3c5);
		overflow: hidden;
		font-size: 19px;
		color: #333;
	}

	footer > * {
		display: flex;
		align-items: center;
		height: 50px;
	}

	.more {
		width: 237px;
		justify-content: center;
		border-right: 1px solid #b5b4b7;
	}

	.more button {
		width: 146px;
		height: 40px;
		border-radius: 4px;
		background: #2196cf;
		color: #c9ebf5;
	}

	.invite {
		flex: 1;
		gap: 9px;
		padding-left: 9px;
	}

	.invite .avatar {
		width: 34px;
		height: 34px;
		margin-right: 12px;
	}

	.invite .icon {
		width: 24px;
		height: 24px;
	}

	.invite .line {
		stroke-width: 3;
	}

	.cell {
		gap: 8px;
		padding: 0 17px;
		border-left: 1px solid #a9a8ab;
		font-weight: 500;
	}

	.cell svg {
		width: 30px;
		height: 26px;
	}

	.cell.dark {
		background: #4c4b4e;
		color: #e4e4e6;
		font-weight: 700;
	}

	/* player */
	.player {
		position: relative;
		display: flex;
		align-items: flex-start;
		height: 43px;
		box-sizing: border-box;
		padding: 0 28px 0 26px;
		border-bottom: 1px solid #4a4b50;
		background: linear-gradient(#202127, #141519);
		color: #b0b0b3;
		font-family: 'Liberation Sans', 'Noto Sans CJK SC', sans-serif;
		font-size: 14px;
		line-height: 32px;
	}

	.player button {
		display: flex;
		align-items: center;
		height: 32px;
	}

	.progress {
		appearance: none;
		position: absolute;
		left: 12px;
		right: 12px;
		top: -15px;
		height: 2px;
		width: calc(100% - 24px);
		background: linear-gradient(to right, #1f9dc4 var(--played), #ffffff38 var(--played));
	}

	.progress::-webkit-slider-thumb {
		appearance: none;
		width: 0;
		height: 0;
	}

	.stream {
		position: absolute;
		left: 16px;
		top: 6px;
		display: flex;
		align-items: center;
		color: #187a49;
	}

	.stream svg {
		width: 11px;
		height: 12px;
		margin-right: 6px;
		fill: currentColor;
	}

	.clock {
		margin-left: 19px;
		color: #74757a;
		font-size: 17px;
	}

	.stream-right {
		position: absolute;
		top: 10px;
		right: 75px;
		display: flex;
		align-items: center;
		gap: 14px;
		color: #606168;
		font-size: 16px;
		line-height: 26px;
	}

	.stream-right span {
		padding: 0 9px;
		border-radius: 2px;
		background: #2a2b31;
	}

	.stream-right .icon {
		margin-left: 60px;
	}

	.play .icon {
		width: 24px;
		height: 24px;
	}

	.skip {
		margin-left: 30px;
	}

	.skip .icon {
		width: 24px;
		height: 24px;
	}

	.time {
		position: relative;
		margin-left: 32px;
		width: 415px;
		color: #c6c6c9;
	}

	.switch {
		display: flex;
		align-items: center;
		justify-content: flex-end;
		position: relative;
		width: 30px;
		height: 20px;
		margin-top: 7px;
	}

	.switch input {
		appearance: none;
		position: absolute;
		inset: 0;
		border-radius: 10px;
		background: #117399;
	}

	.switch span {
		position: relative;
		width: 16px;
		height: 16px;
		margin-right: 2px;
		border-radius: 50%;
		background: #b4b4b6;
		color: #117399;
		font-size: 12px;
		font-weight: 700;
		line-height: 16px;
		text-align: center;
	}

	.setting {
		margin: 0 28px 0 27px;
	}

	.setting .icon,
	.controls .icon {
		width: 24px;
		height: 24px;
	}

	.send {
		display: flex;
		align-items: center;
		width: 608px;
		height: 34px;
		border-radius: 0 0 2px 2px;
		background: #4a4a4e;
		font-size: 12px;
		overflow: hidden;
	}

	.send > .icon {
		margin: 0 11px 0 8px;
	}

	.send input {
		flex: 1;
	}

	.send a {
		display: flex;
		align-items: center;
		gap: 5px;
		margin-right: 14px;
		color: #8a8a8e;
	}

	.send a svg {
		width: 6px;
		height: 12px;
		fill: none;
		stroke: currentColor;
	}

	.send button {
		justify-content: center;
		width: 60px;
		height: 34px;
		background: #0f6c8f;
	}

	.controls {
		position: relative;
		display: flex;
		gap: 30px;
		margin-left: auto;
		font-size: 16px;
		font-weight: 700;
		color: #9d9da1;
	}

	.texts {
		display: flex;
		gap: 20px;
	}

	.source {
		position: absolute;
		top: 8px;
		right: 8px;
		color: #c4c4c7;
		font-size: 16px;
		text-shadow: 0 0 1px #000;
	}

	/* what the video and its player lay over the picture */
	.video-title {
		position: absolute;
		left: 19px;
		top: 22px;
		color: #fff;
		font-family: 'Liberation Sans', 'Noto Sans CJK SC', sans-serif;
		font-size: 16px;
	}

	.brand {
		position: absolute;
		top: 36px;
		right: 89px;
		display: flex;
		align-items: center;
		gap: 9px;
		color: #ffffffa0;
		font-size: 34px;
		font-weight: 500;
		line-height: 48px;
		text-shadow: 0 0 2px #88888880;
	}

	.brand svg {
		width: 56px;
		height: 56px;
	}

	.owner {
		position: absolute;
		top: 52px;
		right: 192px;
		color: #ffffffd8;
		font-size: 38px;
		line-height: 48px;
		text-shadow: 0 0 2px #99999980;
	}

	.bili {
		position: absolute;
		top: 46px;
		right: 31px;
		color: #ffffff60;
		font-size: 42px;
		font-weight: 700;
		line-height: 54px;
		text-shadow: 0 0 2px #aaaaaa60;
	}

	.help {
		position: absolute;
		top: 22px;
		right: 29px;
		width: 20px;
		height: 20px;
	}

	.pointer {
		position: absolute;
		right: 2px;
		top: 796px;
		width: 16px;
		height: 24px;
	}
</style>
